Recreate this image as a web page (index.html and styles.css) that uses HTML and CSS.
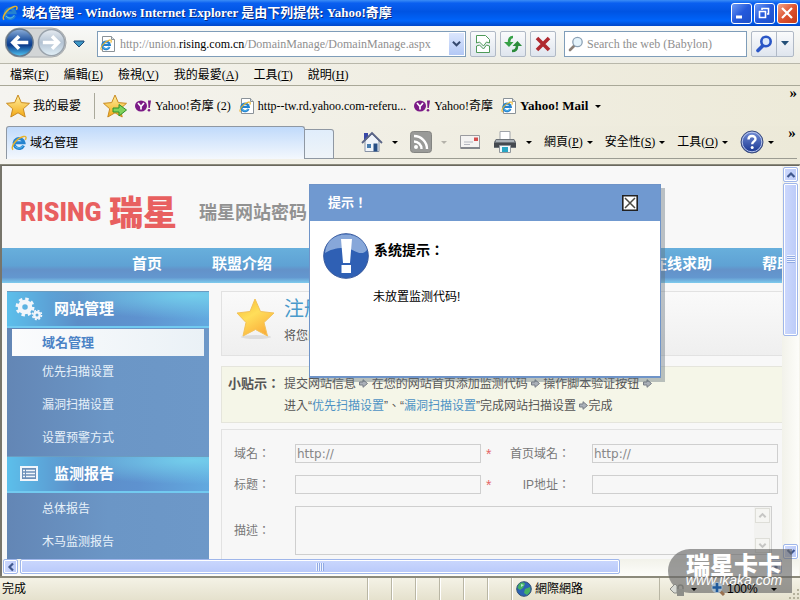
FILE: index.html
```html
<!DOCTYPE html>
<html lang="zh-Hant">
<head>
<meta charset="utf-8">
<title>域名管理</title>
<link rel="stylesheet" href="styles.css">
</head>
<body>
<svg class="defs" width="0" height="0" aria-hidden="true">
  <defs>
    <linearGradient id="gold" x1="0" y1="0" x2="0" y2="1"><stop offset="0" stop-color="#fff0a0"/><stop offset="1" stop-color="#f3a914"/></linearGradient>
    <linearGradient id="gold2" x1="0" y1="0" x2="0.6" y2="1"><stop offset="0" stop-color="#f5b932"/><stop offset=".5" stop-color="#ffde5a"/><stop offset="1" stop-color="#fbb03c"/></linearGradient>
    <linearGradient id="ball" x1="0" y1="0" x2="0" y2="1"><stop offset="0" stop-color="#8fb0da"/><stop offset=".45" stop-color="#1c4f9c"/><stop offset=".6" stop-color="#0c3c8c"/><stop offset="1" stop-color="#52c6f4"/></linearGradient>
    <linearGradient id="ball2" x1="0" y1="0" x2="0" y2="1"><stop offset="0" stop-color="#e6ebf1"/><stop offset=".5" stop-color="#b4c3d3"/><stop offset="1" stop-color="#e2f0f8"/></linearGradient>
    <linearGradient id="help" x1="0" y1="0" x2="0" y2="1"><stop offset="0" stop-color="#7590d8"/><stop offset="1" stop-color="#16338f"/></linearGradient>
    <symbol id="ie" viewBox="0 0 16 16">
      <path d="M12.6 10.6A5 5 0 1 1 13 7.8H4.5" fill="none" stroke="#2483cf" stroke-width="3"/>
      <path d="M12.2 10.4A4.8 4.8 0 0 1 4 11" fill="none" stroke="#5fc0ee" stroke-width="1"/>
      <path d="M2.2 14.6C-1 13 4.5 3.600 12.500 1.500c3-.7 3 1.300 1.800 3.400" fill="none" stroke="#e8b32c" stroke-width="1.400"/>
    </symbol>
    <symbol id="iepage" viewBox="0 0 16 16">
      <path d="M2.500.5h9l3 3v12h-12z" fill="#fff" stroke="#8a9298"/><path d="M11.500.5v3h3" fill="#dde3e6" stroke="#8a9298"/>
      <use href="#ie" x="0" y="3" width="12" height="12"/>
    </symbol>
    <symbol id="star" viewBox="0 0 24 24"><path d="M12 1l3.300 7.600 8.200.7-6.200 5.500 1.900 8.200L12 18.800 4.800 23l1.900-8.200L.5 9.300l8.200-.7z" fill="url(#gold)" stroke="#c98b22" stroke-linejoin="round"/></symbol>
    <symbol id="yahoo" viewBox="0 0 17 12"><ellipse cx="6" cy="6" rx="6" ry="5.500" fill="#7b1a86"/><path d="M3 3l3 3.500L9 3M6 6.500V9.500" fill="none" stroke="#fff" stroke-width="1.700"/><path d="M13 .5h3l-1.200 7.500h-1.300z" fill="#7b1a86"/><circle cx="14" cy="10.300" r="1.300" fill="#7b1a86"/></symbol>
    <symbol id="step" viewBox="0 0 9 9"><path d="M.5 3h3.500V.7L8.500 4.500 4 8.300V6H.5z" fill="#aab0b8" stroke="#777d86"/></symbol>
    <symbol id="lens" viewBox="0 0 16 16"><path d="M6.500 9.500L2 14" stroke="#8b7f76" stroke-width="2.600" stroke-linecap="round"/><circle cx="9.500" cy="6" r="4.700" fill="#e4f3fb" stroke="#8ba0b4" stroke-width="1.300"/></symbol>
    <symbol id="up" viewBox="0 0 10 10"><path d="M1.500 7L5 3.500 8.500 7" fill="none" stroke="currentColor" stroke-width="2.200"/></symbol>
  </defs>
</svg>

<header class="titlebar">
  <svg class="i16" viewBox="0 0 16 16"><use href="#ie"/></svg>
  <h1>域名管理 - Windows Internet Explorer 是由下列提供: Yahoo!奇摩</h1>
  <button class="win" aria-label="最小化"><svg viewBox="0 0 18 18"><path d="M4 13h6" stroke="#fff" stroke-width="3"/></svg></button>
  <button class="win" aria-label="還原"><svg viewBox="0 0 18 18" fill="none" stroke="#fff"><path d="M7 6V4.500h6.500V10H12" stroke-width="1.600"/><path d="M4.500 7.500h6v6h-6z" stroke-width="1.600"/></svg></button>
  <button class="win close" aria-label="關閉"><svg viewBox="0 0 18 18"><path d="M4 4l10 10M14 4L4 14" stroke="#fff" stroke-width="2.200"/></svg></button>
</header>

<div class="navrow">
  <svg class="backfwd" viewBox="0 0 66 34">
    <path d="M15 1h33a15 15 0 0 1 0 30h-33a15 15 0 0 1 0-30z" fill="#d2d5d6" stroke="#a6a9ab"/>
    <circle cx="15" cy="16" r="14" fill="url(#ball)" stroke="#65788c" stroke-width="1.500"/>
    <circle cx="48" cy="16" r="13.500" fill="url(#ball2)" stroke="#9aa3ac" stroke-width="1.500"/>
    <path d="M24 16H9M14.500 9.500L8 16l6.500 6.500" fill="none" stroke="#fff" stroke-width="3.600"/>
    <path d="M39 16h15M48.500 9.500L55 16l-6.500 6.500" fill="none" stroke="#fff" stroke-width="3.600"/>
  </svg>
  <svg class="recent" viewBox="0 0 12 8"><path d="M1 1h10v1L6 7 1 2z" fill="#3d96c4" stroke="#1f4a78"/></svg>
  <div class="address">
    <svg class="i16" viewBox="0 0 16 16"><use href="#iepage"/></svg>
    <p class="url">http://union.<b>rising.com.cn</b>/DomainManage/DomainManage.aspx</p>
    <button class="drop" aria-label="網址清單"><svg viewBox="0 0 10 10"><path d="M1 3l4 4 4-4" fill="none" stroke="#35486e" stroke-width="2.200"/></svg></button>
  </div>
  <button class="tool" aria-label="相容性檢視"><svg viewBox="0 0 18 20"><path d="M2.500 9V1.500h9l4 4V9l-3-1-3 4-4-4zM2.500 12l3-1 4 4 3-4 3 1v6.500h-13z" fill="#fff" stroke="#4e9a58"/></svg></button>
  <button class="tool" aria-label="重新整理"><svg viewBox="0 0 18 20"><path d="M9 3C6 3 5 5 5 9" fill="none" stroke="#35a046" stroke-width="2.600"/><path d="M0 8h9.500L5 13z" fill="#35a046"/><path d="M8 17c4 0 5-2 5-5" fill="none" stroke="#2c8b3b" stroke-width="2.600"/><path d="M8.500 12H18l-4.500-5z" fill="#2c8b3b"/></svg></button>
  <button class="tool" aria-label="停止"><svg viewBox="0 0 18 20"><path d="M3 4l12 12M15 4L3 16" stroke="#b02a30" stroke-width="3.600"/></svg></button>
  <label class="search">
    <svg class="i16" viewBox="0 0 16 16"><use href="#lens"/></svg>
    <input type="text" aria-label="搜尋" placeholder="Search the web (Babylon)">
  </label>
  <div class="go">
    <button aria-label="搜尋"><svg viewBox="0 0 18 18"><path d="M8 10.500L3 15.500" stroke="#2a56c6" stroke-width="3.600" stroke-linecap="round"/><circle cx="11" cy="6.500" r="4.700" fill="#dbe9fb" stroke="#2a56c6" stroke-width="2.600"/></svg></button>
    <button class="more" aria-label="搜尋選項"><svg viewBox="0 0 8 5"><path d="M0 0h8L4 4.500z" fill="#234f78"/></svg></button>
  </div>
</div>

<nav class="menubar" aria-label="功能表">
  <a href="#">檔案(<u>F</u>)</a><a href="#">編輯(<u>E</u>)</a><a href="#">檢視(<u>V</u>)</a><a href="#">我的最愛(<u>A</u>)</a><a href="#">工具(<u>T</u>)</a><a href="#">說明(<u>H</u>)</a>
</nav>

<div class="favbar">
  <button class="fav"><svg class="i24" viewBox="0 0 24 24"><use href="#star"/></svg>我的最愛</button>
  <button class="addfav" aria-label="加到我的最愛列"><svg class="i24" viewBox="0 0 24 24"><use href="#star"/><path d="M10 14h6v-3.500l7.500 5.500-7.500 6v-4h-6z" fill="#7ed35c" stroke="#2f8f2b"/></svg></button>
  <a href="#"><svg class="y" viewBox="0 0 17 12"><use href="#yahoo"/></svg>Yahoo!奇摩 (2)</a>
  <a href="#"><svg class="i16" viewBox="0 0 16 16"><use href="#iepage"/></svg>http--tw.rd.yahoo.com-referu...</a>
  <a href="#"><svg class="y" viewBox="0 0 17 12"><use href="#yahoo"/></svg>Yahoo!奇摩</a>
  <a href="#" class="mail"><svg class="i16" viewBox="0 0 16 16"><use href="#iepage"/></svg>Yahoo! Mail<i class="caret"></i></a>
  <button class="chev" aria-label="更多我的最愛">»</button>
</div>

<div class="tabrow">
  <a href="#" class="tab"><svg class="i16" viewBox="0 0 16 16"><use href="#ie"/></svg>域名管理</a>
  <button class="newtab" aria-label="新索引標籤"></button>
  <div class="cmds">
    <button class="ico" aria-label="首頁"><svg class="i22" viewBox="0 0 22 22"><path d="M3 2h4v7H3z" fill="#3948a8"/><path d="M4 10l7-7 7 7v10.500H4z" fill="#f0f4fa" stroke="#8792a5"/><path d="M1 12L11 2l10 10" fill="none" stroke="#5b6587" stroke-width="1.800"/><path d="M6 13h4v4H6z" fill="#477cae"/><path d="M12.500 12.500h4v8h-4z" fill="#274e85"/></svg><i class="caret"></i></button>
    <button class="ico" aria-label="摘要"><svg class="i22" viewBox="0 0 22 22"><rect x=".5" y=".5" width="21" height="21" rx="3" fill="#999a98" stroke="#848582"/><circle cx="6" cy="16" r="2" fill="#fff"/><path d="M4 10.500a7.500 7.500 0 0 1 7.500 7.500M4 5a13 13 0 0 1 13 13" fill="none" stroke="#fff" stroke-width="2.400"/></svg><i class="caret dim"></i></button>
    <button aria-label="讀取郵件"><svg class="i22" viewBox="0 0 22 22"><path d="M1.500 4.500h19v13h-19z" fill="#f4f3f2" stroke="#9a9b9f"/><path d="M2 17h19" stroke="#83868c" stroke-width="2"/><path d="M15 6.500h4V10h-4z" fill="#d44d4d"/><path d="M5 11h9M5 13.500h6" stroke="#b4b7c0"/></svg></button>
    <button class="ico" aria-label="列印"><svg class="i24" viewBox="0 0 24 24"><path d="M7 1.500h10v9H7z" fill="#fff" stroke="#a0a4aa"/><path d="M3 9h18l2 3v6H1v-6z" fill="#6d7379"/><path d="M1 13h22v4H1z" fill="#44494f"/><path d="M3 10h18v2H3z" fill="#a8afb5"/><path d="M6.500 15.500h11v7h-11z" fill="#f3fafc" stroke="#92979c"/><path d="M9 17h6v5H9z" fill="#29a6c4"/></svg><i class="caret"></i></button>
    <button>網頁(<u>P</u>)<i class="caret"></i></button>
    <button>安全性(<u>S</u>)<i class="caret"></i></button>
    <button>工具(<u>O</u>)<i class="caret"></i></button>
    <button class="helpbtn" aria-label="說明"><svg class="i24" viewBox="0 0 24 24"><circle cx="12" cy="12" r="11" fill="url(#help)" stroke="#40507c"/><circle cx="12" cy="12" r="9.800" fill="none" stroke="#b8c5ea"/><path d="M8.500 9.500c0-4.500 7-4.500 7-.5 0 2.500-3.300 2.400-3.300 5.300" fill="none" stroke="#fff" stroke-width="2.400"/><circle cx="12.200" cy="17.500" r="1.500" fill="#fff"/></svg><i class="caret"></i></button>
  </div>
  <button class="chev" aria-label="更多命令">»</button>
</div>

<div class="frame">
  <div class="view">
    <div class="site">
      <div class="brand"><span class="rising">RISING</span><span class="rx">瑞星</span><span class="slogan">瑞星网站密码</span></div>
      <nav class="sitenav">
        <a href="#">首页</a><a href="#">联盟介绍</a><a href="#" class="far">在线求助</a><a href="#">帮助</a>
      </nav>
      <div class="cols">
        <aside class="side">
          <h2><svg viewBox="0 0 28 24"><g fill="none" stroke="#f2f6fb"><circle cx="10" cy="10" r="5" stroke-width="4.500"/><circle cx="10" cy="10" r="8" stroke-width="3" stroke-dasharray="3.400 2.880"/><circle cx="22" cy="18" r="2.700" stroke-width="2.400"/><circle cx="22" cy="18" r="4.500" stroke-width="1.600" stroke-dasharray="2 1.530"/></g></svg>网站管理</h2>
          <ul>
            <li><a href="#" class="on">域名管理</a></li><li><a href="#">优先扫描设置</a></li><li><a href="#">漏洞扫描设置</a></li><li><a href="#">设置预警方式</a></li>
          </ul>
          <h2><svg viewBox="0 0 28 24"><path d="M6 5h16v13H6z" fill="#6c8fb8" stroke="#f2f6fb" stroke-width="2"/><path d="M8 8.500h2M8 11.500h2M8 14.500h2M11 8.500h9M11 11.500h9M11 14.500h9" stroke="#f2f6fb" stroke-width="1.400"/></svg>监测报告</h2>
          <ul class="plain"><li><a href="#">总体报告</a></li><li><a href="#">木马监测报告</a></li></ul>
        </aside>
        <main class="main">
          <section class="intro">
            <svg viewBox="0 0 40 42"><ellipse cx="20" cy="39" rx="15" ry="2" fill="#ddd"/><path d="M19 1l5.500 12.500L38 15l-10 9.500L31.500 38 19.500 31.500 7 38l3-13.500L1 15l13-1.500z" fill="url(#gold2)" stroke="#f3c259" stroke-linejoin="round"/></svg>
            <div><h2>注册</h2><p>将您的</p></div>
          </section>
          <section class="tips">
            <strong>小贴示：</strong>
            <p>提交网站信息 <svg class="st" viewBox="0 0 9 9"><use href="#step"/></svg> 在您的网站首页添加监测代码 <svg class="st" viewBox="0 0 9 9"><use href="#step"/></svg> 操作脚本验证按钮 <svg class="st" viewBox="0 0 9 9"><use href="#step"/></svg><br>进入“<a href="#">优先扫描设置</a>”、“<a href="#">漏洞扫描设置</a>”完成网站扫描设置 <svg class="st" viewBox="0 0 9 9"><use href="#step"/></svg>完成</p>
          </section>
          <form class="form">
            <label for="domain">域名：</label><input id="domain" type="text" value="http://"><span class="req">*</span>
            <label for="home" class="r">首页域名：</label><input id="home" type="text" value="http://">
            <label for="title">标题：</label><input id="title" type="text"><span class="req">*</span>
            <label for="ip" class="r">IP地址：</label><input id="ip" type="text">
            <label for="desc">描述：</label>
            <div class="area"><textarea id="desc"></textarea><div class="mini"><svg viewBox="0 0 10 10"><use href="#up"/></svg><svg class="flip" viewBox="0 0 10 10"><use href="#up"/></svg></div></div>
          </form>
        </main>
      </div>
    </div>
    <div class="vbar"><span class="sb"><svg viewBox="0 0 10 10"><use href="#up"/></svg></span><span class="thumb"><i></i></span><span class="sb end"><svg class="flip" viewBox="0 0 10 10"><use href="#up"/></svg></span></div>
    <div class="hbar"><span class="sb"><svg class="left" viewBox="0 0 10 10"><use href="#up"/></svg></span><span class="thumb"><i></i></span><span class="sb end"><svg class="right" viewBox="0 0 10 10"><use href="#up"/></svg></span></div>
  </div>
  <div class="dialog" role="dialog" aria-labelledby="dlg">
    <div class="dhead"><h2 id="dlg">提示！</h2><button aria-label="关闭"><svg viewBox="0 0 16 16"><path d="M.8.8h14.400v14.400H.8z" fill="#fff" stroke="#222" stroke-width="1.600"/><path d="M3 3l10 10M13 3L3 13" stroke="#4b4b45" stroke-width="1.500"/></svg></button></div>
    <div class="dbody">
      <svg viewBox="0 0 46 46"><circle cx="23" cy="23" r="22.300" fill="#2f60b4" stroke="#36589c"/><path d="M2 20C3 8 12 1.500 23 1.500S42 8 44 17c-7 8-13-2-23-2-9 0-14 2-19 5z" fill="#87a7d9"/><path d="M18 6h11l-2 24h-7zM18.500 32h9.500v8h-9.500z" fill="#fff"/></svg>
      <div><h3>系统提示：</h3><p>未放置监测代码!</p></div>
    </div>
  </div>
</div>

<footer class="status">
  <span class="done">完成</span>
  <span class="cell"></span><span class="cell"></span><span class="cell"></span><span class="cell"></span><span class="cell"></span><span class="cell"></span>
  <span class="zone"><svg class="i16" viewBox="0 0 16 16"><circle cx="8" cy="8" r="7.300" fill="#2b62b4" stroke="#315173"/><path d="M3 3c3-2 5-2 6 0L7 7 4 9 1.500 7zM9 8l5-2c1 3 0 6-3 8l-3-2z" fill="#45b163"/><path d="M5 3l3 1-3 2z" fill="#b2ebcf"/></svg>網際網路</span>
  <span class="prot"><svg class="i16" viewBox="0 0 16 16"><path d="M1 8l5-5 2 2v7H5z" fill="#d9dbd5" stroke="#898b86"/><path d="M9 8V6.500a2.500 2.500 0 0 1 5 0V8" fill="none" stroke="#7b7c78" stroke-width="1.500"/><path d="M8 8h7v7H8z" fill="#8d8e89"/></svg><i class="caret"></i></span>
  <span class="zoom"><svg class="i16" viewBox="0 0 16 16"><path d="M9 9l5 5" stroke="#9a7250" stroke-width="3"/><circle cx="7" cy="6.500" r="5.500" fill="#a9bccb"/><path d="M7 2v9M2.500 6.500h9" stroke="#205a9c" stroke-width="2.600"/></svg>100%<i class="caret"></i>
    <svg class="grip" viewBox="0 0 12 12"><path d="M9 1h2v2H9zM5 5h2v2H5zM9 5h2v2H9zM1 9h2v2H1zM5 9h2v2H5zM9 9h2v2H9z" fill="#b5b29c"/></svg></span>
</footer>
<div class="mark"><b>瑞星卡卡</b><span>www.ikaka.com</span></div>
</body>
</html>
```
FILE: styles.css
```css
* { box-sizing: border-box; }
body {
  margin: 0; height: 100vh; overflow: hidden; position: relative;
  display: flex; flex-direction: column; background: #ece9d8; color: #000;
  font: 12px/16px "Liberation Serif", "Noto Sans CJK TC", serif;
}
.defs { position: absolute; }
svg { display: block; flex: none; }
h1, h2, h3, p, ul { margin: 0; padding: 0; font-weight: normal; }
button { padding: 0; border: 0; background: none; font: inherit; color: inherit; }
a { color: inherit; text-decoration: none; }
input, textarea { font: inherit; border: 0; padding: 0; margin: 0; background: none; outline: 0; min-width: 0; }
.i16 { width: 16px; height: 16px; }
.i22 { width: 22px; height: 22px; }
.i24 { width: 24px; height: 24px; }
.caret { display: inline-block; vertical-align: 2px; border: 3px solid transparent; border-top-color: currentColor; border-bottom: 0; }
.dim { opacity: .25; }

.titlebar {
  height: 26px; flex: none; display: flex; align-items: center; gap: 2px; padding: 0 2px;
  background: linear-gradient(#3b8df6, #0a5ff0 12%, #0054e3 45%, #0064fa 80%, #0046c8);
}
.titlebar h1 { flex: 1; padding-left: 2px; color: #fff; font-size: 13px; line-height: 16px; font-weight: bold; text-shadow: 1px 1px 0 #0a2a80; white-space: nowrap; }
.win { width: 21px; height: 21px; border: 1px solid #fff; border-radius: 3px; background: linear-gradient(135deg, #6f9bf5, #2459dc 50%, #1d50c8); }
.win svg { width: 18px; height: 18px; }
.close { background: linear-gradient(135deg, #f0a58a, #de5330 50%, #c43a18); }

.navrow {
  height: 38px; flex: none; display: flex; align-items: center; gap: 4px; padding: 0 6px 2px 5px;
  background: linear-gradient(#f8f9f8, #eeede4); border-bottom: 1px solid #b8b7aa;
}
.backfwd { width: 64px; height: 33px; }
.recent { width: 12px; height: 8px; }
.address { flex: 1; height: 26px; margin-left: 8px; display: flex; align-items: center; background: #fff; border: 1px solid #7f9db9; padding: 0 1px 0 2px; }
.url { flex: 1; padding-left: 4px; color: #8f8f8f; overflow: hidden; white-space: nowrap; }
.url b { font-weight: normal; color: #000; }
.drop { width: 15px; height: 22px; background: linear-gradient(#dbe6fd, #b3c8f5); }
.drop svg { width: 9px; margin: auto; }
.tool { width: 26px; height: 26px; border: 1px solid #b0b9c6; border-radius: 2px; background: linear-gradient(#fafbfc, #dfe5ee); }
.tool svg { width: 18px; height: 20px; margin: auto; }
.search { width: 183px; height: 26px; margin-left: 4px; display: flex; align-items: center; gap: 3px; padding: 0 3px; background: #fff; border: 1px solid #7f9db9; }
.search input { flex: 1; }
.search input::placeholder { color: #8f8f8f; opacity: 1; }
.go { display: flex; width: 43px; height: 26px; border: 1px solid #b0b9c6; border-radius: 2px; background: linear-gradient(#fafbfc, #dfe5ee); }
.go button { flex: 1; }
.go svg { width: 18px; margin: auto; }
.go .more { flex: none; width: 17px; border-left: 1px solid #b0b9c6; }
.go .more svg { width: 8px; }

.menubar { height: 22px; flex: none; display: flex; align-items: center; gap: 15px; padding-left: 10px; background: linear-gradient(90deg, #f4f3ee, #ece9d8); border-bottom: 1px solid #a9a898; }

.favbar { height: 40px; flex: none; display: flex; align-items: center; gap: 8px; padding: 0 3px 0 6px; background: linear-gradient(90deg, #f5f4f0, #edead9); white-space: nowrap; }
.favbar a, .fav { display: flex; align-items: center; gap: 3px; }
.fav { padding-right: 13px; height: 26px; border-right: 1px solid #aaa99b; }
.y { width: 17px; height: 12px; }
.mail { font-weight: bold; font-size: 13px; }
.mail .caret { margin-left: 4px; }
.chev { align-self: flex-start; margin-left: auto; font-size: 15px; font-weight: bold; line-height: 14px; }

.tabrow { height: 39px; flex: none; display: flex; align-items: stretch; padding: 0 3px 5px 6px; background: linear-gradient(90deg, #f5f4f0, #ece9d8); border-bottom: 1px solid #8b8a7c; }
.tab { flex: 1; display: flex; align-items: center; gap: 3px; padding: 0 4px; border: 1px solid #8f98a3; border-bottom: 0; border-radius: 3px 3px 0 0; background: linear-gradient(#c0dafb, #f4f8fd); }
.newtab { width: 29px; margin-top: 3px; border: 1px solid #8f98a3; border-left: 0; border-radius: 0 3px 0 0; background: linear-gradient(#e0edfb, #eff4f8); }
.cmds { display: flex; align-items: center; gap: 12px; padding-left: 27px; border-bottom: 1px solid #9c9c92; white-space: nowrap; }
.cmds .caret { margin-left: 4px; }
.ico, .helpbtn { display: flex; align-items: center; }
.cmds .ico .caret { margin-left: 9px; }
.tabrow .chev { width: 23px; padding: 0 0 20px 13px; margin: 0; align-self: stretch; border-bottom: 1px solid #9c9c92; }

.frame { flex: 1; min-height: 0; position: relative; display: flex; border-left: 2px solid #77756b; border-top: 1px solid #6a685e; border-right: 1px solid #f5f4ec; }
.view { flex: 1; min-width: 0; display: grid; grid-template: minmax(0, 1fr) 17px / minmax(0, 1fr) 17px; background: #f9f9f7; }
.site { overflow: hidden; background: #f8f8f8; font-family: "Liberation Sans", "Noto Sans CJK TC", sans-serif; color: #555; }
.brand { height: 82px; display: flex; align-items: center; padding: 12px 0 0 18px; white-space: nowrap; }
.rising, .rx { color: #e86060; font-weight: 900; }
.rising { font: 900 25px/28px Roboto, sans-serif; width: 89px; }
.rx { font-size: 34px; line-height: 28px; width: 90px; }
.slogan { color: #929292; font-size: 18px; font-weight: bold; }
.sitenav { height: 35px; display: flex; align-items: center; gap: 50px; padding: 0 0 4px 130px; white-space: nowrap; color: #fff; font-size: 15px; font-weight: bold; background: linear-gradient(#68afdc, #5fa2d4 50%, #6392c9 62%, #6397cf 84%, #7ecbed); }
.far { margin-left: 330px; }
.cols { display: flex; gap: 12px; padding: 8px 0 0 5px; }
.side { width: 202px; flex: none; min-height: 300px; background: linear-gradient(90deg, #6386b5, #6b96c6 50%, #6d98c8); color: #e7f1fa; }
.side h2 { height: 37px; display: flex; align-items: center; gap: 11px; padding-left: 8px; color: #fff; font-size: 15px; font-weight: bold; border-top: 1px solid #6b9cc0; border-bottom: 2px solid #72caf0; background: radial-gradient(ellipse at 92% 10%, #73cdeb, transparent 55%), linear-gradient(90deg, #5cbfeb, #5c8ec8 35%, #5e92cf 65%, #62a9df); }
.side h2 svg { width: 28px; height: 24px; }
.side ul { list-style: none; height: 128px; }
.side li { height: 33px; line-height: 33px; padding-left: 35px; }
.side .on { display: block; height: 27px; line-height: 28px; margin: 0 5px 0 -30px; padding-left: 30px; color: #4b83c6; font-weight: bold; font-size: 13px; background: linear-gradient(90deg, #fbfcfd, #eaf1f6); }
.side li:first-child:has(.on) { height: 28px; padding-top: 1px; }
.main { flex: 1; min-width: 0; }
.intro { height: 65px; display: flex; gap: 8px; padding: 6px 14px; border: 1px solid #e2e2e2; border-right: 0; background: linear-gradient(#fafafa, #efefef); white-space: nowrap; }
.intro > svg { width: 40px; height: 42px; }
.intro h2 { font-size: 20px; line-height: 22px; color: #4a9acb; }
.intro p { line-height: 32px; }
.tips { height: 57px; margin-top: 10px; display: flex; gap: 1px; padding: 6px; line-height: 22px; border: 1px solid #e5e5dc; border-right: 0; background: #f5f6e8; white-space: nowrap; }
.tips strong { width: 55px; font-size: 13px; }
.tips a { color: #4d92c4; }
.st { display: inline-block; width: 9px; height: 9px; }
.form { margin-top: 6px; padding: 14px 4px 20px 12px; display: grid; grid-template-columns: 61px minmax(0, 1fr) 29px 82px minmax(0, 1fr); row-gap: 12px; align-items: center; border: 1px solid #e2e2e2; border-right: 0; border-bottom: 0; background: #f7f7f7; color: #777; }
.form > input { height: 19px; border: 1px solid #cfcfcf; padding: 0 1px; color: #888; font: 12px/16px "DejaVu Sans", sans-serif; }
.req { padding-left: 5px; color: #e46666; font-size: 14px; }
.form .r { width: 60px; text-align: right; white-space: nowrap; }
.area { grid-column: 2 / 6; height: 49px; margin-right: 6px; display: flex; border: 1px solid #cfcfcf; }
.area textarea { flex: 1; resize: none; overflow: hidden; height: 100%; }
.mini { width: 17px; padding: 1px; display: flex; flex-direction: column; justify-content: space-between; background: #f2f2f0; color: #c6c6c4; }
.mini svg { width: 15px; height: 15px; padding: 2px; border: 1px solid #deded8; background: #f5f5f2; }
.flip { transform: rotate(180deg); }
.left { transform: rotate(-90deg); }
.right { transform: rotate(90deg); }
.vbar, .hbar { display: flex; background: linear-gradient(90deg, #f2f2ea, #fdfdfa); }
.vbar { flex-direction: column; padding: 1px 1px 0; }
.hbar { grid-column: 1 / 3; padding: 0 17px 0 1px; background: linear-gradient(#f2f2ea, #fdfdfa); }
.sb, .thumb { border: 1px solid #9fb6ea; border-radius: 2px; background: linear-gradient(90deg, #cdd9fd, #bccbf8); box-shadow: inset 0 0 0 1px #fff; }
.sb { width: 15px; height: 15px; display: flex; align-items: center; justify-content: center; color: #41598f; }
.sb svg { width: 10px; height: 10px; }
.thumb { display: flex; align-items: center; justify-content: center; }
.vbar .thumb { height: 39%; margin-top: 1px; }
.hbar .thumb { width: 77%; height: 15px; margin-left: 2px; background: linear-gradient(#cad7fd, #b9c9fa); }
.thumb i { width: 8px; height: 8px; background: repeating-linear-gradient(#eef3ff 0 1px, #91aae3 1px 2px); }
.hbar .thumb i { background: repeating-linear-gradient(90deg, #eef3ff 0 1px, #91aae3 1px 2px); }
.vbar .end { margin-top: auto; }
.hbar .end { margin-left: auto; }

.dialog { position: absolute; left: 307px; top: 18px; width: 352px; height: 194px; background: #fff; border: 1px solid #6f94c8; border-bottom-width: 2px; box-shadow: 4px 4px 0 rgba(100, 115, 125, .42); font-family: "Liberation Sans", "Noto Sans CJK TC", sans-serif; }
.dhead { height: 36px; display: flex; align-items: center; justify-content: space-between; padding: 0 22px 0 18px; background: #7099d0; color: #fff; }
.dhead h2 { font-size: 13px; font-weight: bold; }
.dhead svg { width: 16px; height: 16px; }
.dbody { display: flex; gap: 4px; padding: 12px 13px; }
.dbody > svg { width: 46px; height: 46px; }
.dbody h3 { font-size: 14px; line-height: 18px; font-weight: bold; padding: 8px 0 0 1px; }
.dbody p { padding-top: 30px; }

.status { height: 24px; flex: none; display: flex; align-items: stretch; line-height: 22px; border-top: 2px solid #8c8a7b; background: linear-gradient(#f4f2e6, #e5e1cd); white-space: nowrap; }
.done { flex: 1; padding-left: 2px; }
.cell { width: 24px; border-left: 1px solid #b9b6a4; box-shadow: inset 1px 0 #fff; }
.zone, .prot, .zoom { display: flex; align-items: center; gap: 3px; padding-left: 4px; border-left: 1px solid #b9b6a4; box-shadow: inset 1px 0 #fff; }
.zone { width: 148px; }
.prot, .zoom { position: relative; z-index: 2; box-shadow: none; }
.prot { width: 43px; padding-left: 9px; gap: 6px; }
.zoom { width: 98px; padding-left: 8px; gap: 1px; border-left: 0; font-family: "Liberation Sans", sans-serif; }
.zoom .caret { margin-left: 12px; }
.grip { width: 12px; height: 12px; margin: auto 0 0 auto; }
.mark { position: absolute; z-index: 1; right: 8px; bottom: 7px; width: 124px; height: 44px; display: flex; flex-direction: column; align-items: center; border-radius: 22px 0 0 22px; padding: 5px 0 0 8px; background: rgba(105, 105, 105, .65); color: #fff; white-space: nowrap; }
.mark b { font: 900 24px/20px "Noto Sans CJK TC", sans-serif; }
.mark span { font: italic 14px/12px "Liberation Sans", sans-serif; }
```
